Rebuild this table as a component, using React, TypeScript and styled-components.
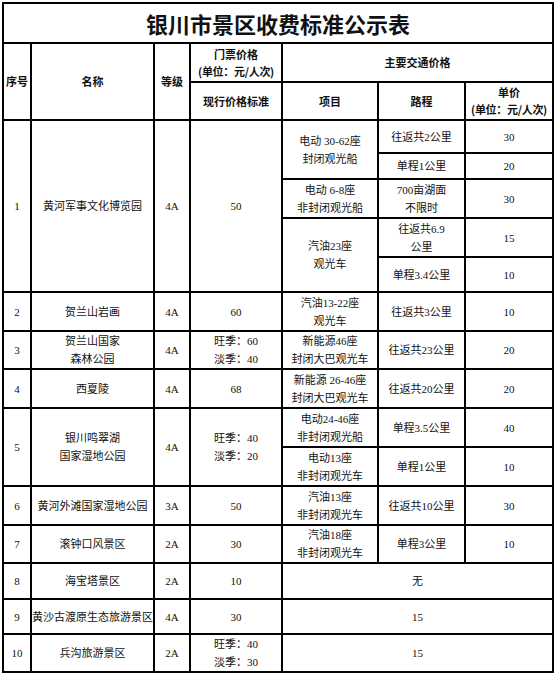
import React from 'react'
import styled, { createGlobalStyle } from 'styled-components'

const GlobalStyle = createGlobalStyle`
  html, body {
    margin: 0;
    padding: 0;
    background: #fff;
  }
  body {
    font-family: "Liberation Serif", "Noto Sans CJK SC", serif;
    color: #111;
  }
`

const Page = styled.div`
  padding: 2px 0 0 2px;
  width: 555px;
  box-sizing: border-box;
`

const Table = styled.table`
  border-collapse: collapse;
  table-layout: fixed;
  width: 550px;
  font-size: 11px;
  line-height: 18px;
`

const Cell = styled.td<{ $bold?: boolean }>`
  border: 2px solid #000;
  padding: 0;
  text-align: center;
  vertical-align: middle;
  white-space: nowrap;
  overflow: hidden;
  font-weight: ${p => (p.$bold ? 700 : 400)};
`

const HeadCell = styled(Cell).attrs({ $bold: true })`
  font-family: "Noto Sans CJK SC", sans-serif;
  font-size: 11px;
  line-height: 17px;
`

const Unit = styled.span`
  letter-spacing: -0.3px;
`

const Title = styled.td`
  border: 2px solid #000;
  padding: 0;
  text-align: center;
  vertical-align: middle;
  font-family: "Noto Sans CJK SC", sans-serif;
  font-weight: 700;
  font-size: 22px;
  color: #111;
`

const Row = styled.tr<{ $h: number }>`
  height: ${p => p.$h}px;
`

const widths = [28, 123, 36, 92, 96, 87, 88]

type Sub = { item?: React.ReactNode; itemSpan?: number; route: React.ReactNode; price: string; h: number }
type Spot = {
  no: string
  name: React.ReactNode
  level: string
  ticket: React.ReactNode
  subs?: Sub[]
  flat?: string
  h?: number
}

const lines = (...t: React.ReactNode[]) =>
  t.map((s, i) => (
    <React.Fragment key={i}>
      {i > 0 && <br />}
      {s}
    </React.Fragment>
  ))

const spots: Spot[] = [
  {
    no: '1', name: '黄河军事文化博览园', level: '4A', ticket: '50',
    subs: [
      { item: lines('电动 30-62座', '封闭观光船'), itemSpan: 2, route: '往返共2公里', price: '30', h: 33 },
      { route: '单程1公里', price: '20', h: 26 },
      { item: lines('电动 6-8座', '非封闭观光船'), itemSpan: 1, route: lines('700亩湖面', '不限时'), price: '30', h: 39 },
      { item: lines('汽油23座', '观光车'), itemSpan: 2, route: lines('往返共6.9', '公里'), price: '15', h: 39 },
      { route: '单程3.4公里', price: '10', h: 35 },
    ],
  },
  {
    no: '2', name: '贺兰山岩画', level: '4A', ticket: '60',
    subs: [{ item: lines('汽油13-22座', '观光车'), itemSpan: 1, route: '往返共3公里', price: '10', h: 39 }],
  },
  {
    no: '3', name: lines('贺兰山国家', '森林公园'), level: '4A', ticket: lines('旺季：60', '淡季：40'),
    subs: [{ item: lines('新能源46座', '封闭大巴观光车'), itemSpan: 1, route: '往返共23公里', price: '20', h: 38 }],
  },
  {
    no: '4', name: '西夏陵', level: '4A', ticket: '68',
    subs: [{ item: lines('新能源 26-46座', '封闭大巴观光车'), itemSpan: 1, route: '往返共20公里', price: '20', h: 39 }],
  },
  {
    no: '5', name: lines('银川鸣翠湖', '国家湿地公园'), level: '4A', ticket: lines('旺季：40', '淡季：20'),
    subs: [
      { item: lines('电动24-46座', '非封闭观光船'), itemSpan: 1, route: '单程3.5公里', price: '40', h: 39 },
      { item: lines('电动13座', '非封闭观光车'), itemSpan: 1, route: '单程1公里', price: '10', h: 39 },
    ],
  },
  {
    no: '6', name: '黄河外滩国家湿地公园', level: '3A', ticket: '50',
    subs: [{ item: lines('汽油13座', '非封闭观光车'), itemSpan: 1, route: '往返共10公里', price: '30', h: 39 }],
  },
  {
    no: '7', name: '滚钟口风景区', level: '2A', ticket: '30',
    subs: [{ item: lines('汽油18座', '非封闭观光车'), itemSpan: 1, route: '单程3公里', price: '10', h: 38 }],
  },
  { no: '8', name: '海宝塔景区', level: '2A', ticket: '10', flat: '无', h: 36 },
  { no: '9', name: '黄沙古渡原生态旅游景区', level: '4A', ticket: '30', flat: '15', h: 35 },
  { no: '10', name: '兵沟旅游景区', level: '2A', ticket: lines('旺季：40', '淡季：30'), flat: '15', h: 37 },
]

const SpotRows = ({ spot }: { spot: Spot }) => {
  if (spot.flat) {
    return (
      <Row $h={spot.h || 36}>
        <Cell>{spot.no}</Cell>
        <Cell>{spot.name}</Cell>
        <Cell>{spot.level}</Cell>
        <Cell>{spot.ticket}</Cell>
        <Cell colSpan={3}>{spot.flat}</Cell>
      </Row>
    )
  }
  const subs = spot.subs || []
  const span = subs.length
  return (
    <>
      {subs.map((s, i) => (
        <Row key={i} $h={s.h}>
          {i === 0 && (
            <>
              <Cell rowSpan={span}>{spot.no}</Cell>
              <Cell rowSpan={span}>{spot.name}</Cell>
              <Cell rowSpan={span}>{spot.level}</Cell>
              <Cell rowSpan={span}>{spot.ticket}</Cell>
            </>
          )}
          {s.item && <Cell rowSpan={s.itemSpan}>{s.item}</Cell>}
          <Cell>{s.route}</Cell>
          <Cell>{s.price}</Cell>
        </Row>
      ))}
    </>
  )
}

export default function App() {
  return (
    <>
      <GlobalStyle />
      <Page>
        <Table>
          <colgroup>
            {widths.map((w, i) => (
              <col key={i} style={{ width: w }} />
            ))}
          </colgroup>
          <tbody>
            <Row $h={40}>
              <Title colSpan={7}>银川市景区收费标准公示表</Title>
            </Row>
            <Row $h={39}>
              <HeadCell rowSpan={2}>序号</HeadCell>
              <HeadCell rowSpan={2}>名称</HeadCell>
              <HeadCell rowSpan={2}>等级</HeadCell>
              <HeadCell>{lines('门票价格', <Unit>(单位：元/人次)</Unit>)}</HeadCell>
              <HeadCell colSpan={3}>主要交通价格</HeadCell>
            </Row>
            <Row $h={38}>
              <HeadCell>现行价格标准</HeadCell>
              <HeadCell>项目</HeadCell>
              <HeadCell>路程</HeadCell>
              <HeadCell>{lines('单价', <Unit>(单位：元/人次)</Unit>)}</HeadCell>
            </Row>
            {spots.map(s => (
              <SpotRows key={s.no} spot={s} />
            ))}
          </tbody>
        </Table>
      </Page>
    </>
  )
}
